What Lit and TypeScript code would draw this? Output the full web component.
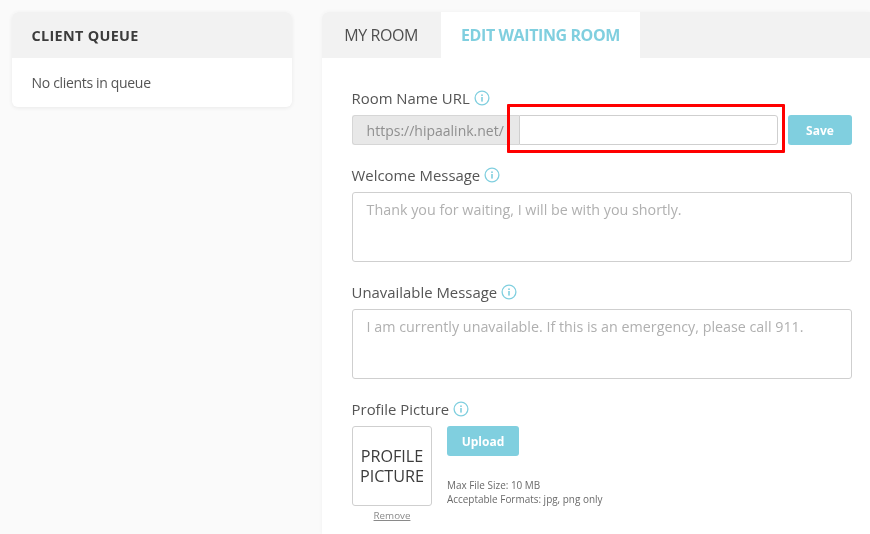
import { LitElement, html, css } from "lit";
import { customElement } from "lit/decorators.js";

const info = html`<svg class="info" viewBox="0 0 16 16" width="16" height="16" aria-hidden="true">
  <circle cx="8" cy="8" r="6.9" fill="none" stroke="#80cfdf" stroke-width="1.3"></circle>
  <rect x="7.2" y="7" width="1.6" height="4.6" fill="#80cfdf"></rect>
  <rect x="7.2" y="4.4" width="1.6" height="1.6" fill="#80cfdf"></rect>
</svg>`;

@customElement("app-root")
export class AppRoot extends LitElement {
  static styles = css`
    :host {
      display: block;
      width: 870px;
      height: 534px;
      overflow: hidden;
      background: #fafafa;
      font-family: "Open Sans", "DejaVu Sans", sans-serif;
      color: #4a4a4a;
      position: relative;
    }
    * { box-sizing: border-box; }
    .page {
      display: flex;
      align-items: flex-start;
      gap: 30px;
      padding: 12px 0 0 12px;
      will-change: transform;
    }
    .queue {
      width: 280px;
      flex: none;
      background: #fff;
      border-radius: 6px;
      overflow: hidden;
      box-shadow: 0 1px 4px rgba(0, 0, 0, 0.07);
    }
    .queue-head {
      height: 46px;
      display: flex;
      align-items: center;
      padding-left: 19.6px;
      background: #f2f2f2;
      font-size: 14.4px;
      font-weight: 700;
      letter-spacing: 0.32px;
      color: #3c3c3c;
    }
    .queue-body {
      height: 49px;
      display: flex;
      align-items: center;
      padding-left: 19.6px;
      font-size: 14px;
      letter-spacing: -0.33px;
      color: #555;
    }
    .main {
      flex: 1;
      min-width: 0;
      height: 522px;
      background: #fff;
      border-radius: 6px 0 0 0;
      box-shadow: 0 0 4px rgba(0, 0, 0, 0.04);
    }
    .tabs {
      display: flex;
      height: 46px;
      background: #f2f2f2;
      border-radius: 6px 0 0 0;
    }
    .tab {
      display: flex;
      align-items: center;
      justify-content: center;
      font-size: 16px;
      letter-spacing: -0.4px;
    }
    .tab.room { width: 119px; padding-right: 0.6px; color: #4f4f4f; }
    .tab.edit {
      width: 199px;
      background: #fff;
      color: #80cfdf;
      font-weight: 700;
    }
    .form {
      padding: 30px 18px 0 29.6px;
      display: flex;
      flex-direction: column;
    }
    .label {
      display: flex;
      align-items: center;
      gap: 4px;
      height: 20px;
      font-size: 14.9px;
      color: #555;
    }
    .url-row {
      display: flex;
      margin-top: 7px;
      margin-left: 0.4px;
      height: 30px;
    }
    .prefix {
      width: 167px;
      flex: none;
      display: flex;
      align-items: center;
      padding-left: 13.6px;
      background: #e8e8e8;
      border: 1px solid #d6d6d6;
      border-right: 0;
      border-radius: 3px 0 0 3px;
      font-size: 14px;
      color: #8f8f8f;
      white-space: nowrap;
    }
    .url-input {
      width: 259px;
      flex: none;
      border: 1px solid #cfcfcf;
      border-radius: 0 3px 3px 0;
      background: #fff;
      outline: none;
    }
    .btn {
      border: 0;
      border-radius: 3px;
      background: #80cfdf;
      color: #fff;
      font-family: inherit;
      font-weight: 700;
      font-size: 12px;
      height: 30px;
      padding: 0;
    }
    .save { width: 64px; margin-left: 10px; }
    .upload { width: 72px; }
    .field-label { margin-top: 20px; }
    .area {
      display: block;
      width: 500px;
      height: 70px;
      margin-top: 7px;
      margin-left: 0.4px;
      padding: 7px 13.6px;
      border: 1px solid #cfcfcf;
      border-radius: 3px;
      background: #fff;
      resize: none;
      outline: none;
      font-family: inherit;
      font-size: 14.3px;
      line-height: 20px;
    }
    .area::placeholder { color: #b0b0b0; opacity: 1; }
    .second { margin-top: 20px; }
    .pic-row {
      display: flex;
      gap: 15px;
      margin-top: 7px;
      margin-left: 0.4px;
    }
    .pic-col {
      width: 80px;
      display: flex;
      flex-direction: column;
      align-items: center;
    }
    .pic {
      width: 80px;
      height: 80px;
      display: flex;
      align-items: center;
      justify-content: center;
      text-align: center;
      border: 1px solid #cfcfcf;
      border-radius: 3px;
      font-size: 16.2px;
      font-weight: 500;
      line-height: 20px;
      color: #3c3c3c;
    }
    .remove {
      margin-top: 3px;
      font-size: 9.8px;
      line-height: 14px;
      color: #8a8a8a;
      text-decoration: underline;
    }
    .upload-col {
      display: flex;
      flex-direction: column;
      align-items: flex-start;
    }
    .hint {
      margin-top: 22px;
      font-size: 9.95px;
      line-height: 14px;
      color: #6a6a6a;
    }
    .mark {
      position: absolute;
      left: 507px;
      top: 104px;
      width: 278px;
      height: 49px;
      border: 3px solid #ff0000;
      border-radius: 1px;
      pointer-events: none;
    }
  `;

  render() {
    return html`
      <div class="page">
        <aside class="queue">
          <div class="queue-head">CLIENT QUEUE</div>
          <div class="queue-body">No clients in queue</div>
        </aside>
        <section class="main">
          <nav class="tabs">
            <div class="tab room">MY ROOM</div>
            <div class="tab edit">EDIT WAITING ROOM</div>
          </nav>
          <div class="form">
            <div class="label">Room Name URL ${info}</div>
            <div class="url-row">
              <div class="prefix">https://hipaalink.net/</div>
              <input class="url-input" type="text" />
              <button class="btn save">Save</button>
            </div>
            <div class="label field-label">Welcome Message ${info}</div>
            <textarea class="area" placeholder="Thank you for waiting, I will be with you shortly."></textarea>
            <div class="label second">Unavailable Message ${info}</div>
            <textarea class="area" placeholder="I am currently unavailable. If this is an emergency, please call 911."></textarea>
            <div class="label second">Profile Picture ${info}</div>
            <div class="pic-row">
              <div class="pic-col">
                <div class="pic">PROFILE<br />PICTURE</div>
                <div class="remove">Remove</div>
              </div>
              <div class="upload-col">
                <button class="btn upload">Upload</button>
                <div class="hint">Max File Size: 10 MB<br />Acceptable Formats: jpg, png only</div>
              </div>
            </div>
          </div>
        </section>
      </div>
      <div class="mark"></div>
    `;
  }
}
